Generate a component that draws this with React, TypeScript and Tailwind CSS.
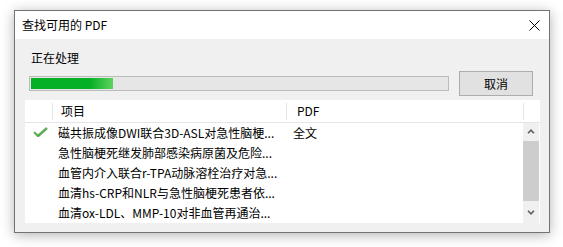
import React from "react";

const rows = [
  { title: "磁共振成像DWI联合3D-ASL对急性脑梗...", pdf: "全文", done: true },
  { title: "急性脑梗死继发肺部感染病原菌及危险...", pdf: "", done: false },
  { title: "血管内介入联合r-TPA动脉溶栓治疗对急...", pdf: "", done: false },
  { title: "血清hs-CRP和NLR与急性脑梗死患者依...", pdf: "", done: false },
  { title: "血清ox-LDL、MMP-10对非血管再通治...", pdf: "", done: false },
];

function CheckMark() {
  return (
    <svg width="15" height="10" viewBox="0 0 15 10" className="mb-[3px]">
      <defs>
        <linearGradient id="chk" x1="0" y1="0" x2="1" y2="1">
          <stop offset="0" stopColor="#7cc576" />
          <stop offset="1" stopColor="#3f9a3a" />
        </linearGradient>
      </defs>
      <path d="M1 5.2 L5 9 L14 1" fill="none" stroke="url(#chk)" strokeWidth="2.4" strokeLinejoin="round" />
    </svg>
  );
}

function Chevron({ up }: { up?: boolean }) {
  return (
    <svg width="8" height="5" viewBox="0 0 8 5">
      <path
        d={up ? "M1 4.2 L4 1.2 L7 4.2" : "M1 0.8 L4 3.8 L7 0.8"}
        fill="none"
        stroke="#606060"
        strokeWidth="1.6"
      />
    </svg>
  );
}

export default function App() {
  return (
    <div className="w-[563px] h-[247px] bg-white pt-[10px] pl-[14px] font-['Noto_Sans_CJK_SC','Noto_Sans',sans-serif] text-[12px] text-black">
      <div className="w-[536px] h-[223px] border border-[#737373] flex flex-col shadow-[0_2px_12px_rgba(0,0,0,0.3)]">
        <div className="h-[30px] bg-white flex items-center justify-between pl-[7px] pr-[9px]">
          <span className="leading-[16px]">查找可用的 PDF</span>
          <svg width="11" height="11" viewBox="0 0 11 11">
            <path d="M0.5 0.5 L10.5 10.5 M10.5 0.5 L0.5 10.5" stroke="#000" strokeWidth="1" />
          </svg>
        </div>

        <div className="flex-1 bg-[#f0f0f0] pl-[10px] pr-[9px] pb-[9px] flex flex-col">
          <div className="pt-[11px] pl-[6px] leading-[16px]">正在处理</div>

          <div className="mt-[5px] h-[25px] flex items-center">
            <div className="ml-[4px] w-[420px] h-[15px] border border-[#bcbcbc] bg-[#e6e6e6] p-[1px]">
              <div className="h-full w-[82px] bg-[linear-gradient(90deg,#06b025_0%,#06b025_72%,#5ed35e_100%)]" />
            </div>
            <div className="ml-[10px] w-[74px] h-[25px] border border-[#adadad] bg-[#e1e1e1] flex items-center justify-center">
              取消
            </div>
          </div>

          <div className="mt-[4px] flex-1 bg-white flex flex-col overflow-hidden">
            <div className="h-[23px] shrink-0 border-b border-[#e5e5e5] flex items-center">
              <div className="w-[27px]" />
              <div className="w-px h-[17px] bg-[#e5e5e5]" />
              <div className="w-[233px] pl-[8px] leading-[16px]">项目</div>
              <div className="w-px h-[17px] bg-[#e5e5e5]" />
              <div className="w-[236px] pl-[10px] leading-[16px]">PDF</div>
              <div className="w-px h-[17px] bg-[#e5e5e5]" />
            </div>

            <div className="flex-1 flex overflow-hidden">
              <div className="w-[498px] flex flex-col overflow-hidden">
                {rows.map((r) => (
                  <div key={r.title} className="h-[20px] shrink-0 flex items-center">
                    <div className="w-[27px] pl-[8px] flex items-center">{r.done && <CheckMark />}</div>
                    <div className="w-[234px] pl-[6px] whitespace-nowrap leading-[16px]">{r.title}</div>
                    <div className="w-[237px] pl-[7px] leading-[16px]">{r.pdf}</div>
                  </div>
                ))}
              </div>
              <div className="w-[16px] bg-[#f0f0f0] flex flex-col">
                <div className="h-[17px] flex items-center justify-center">
                  <Chevron up />
                </div>
                <div className="h-[60px] mt-[1px] bg-[#cdcdcd]" />
                <div className="flex-1 flex items-center justify-center">
                  <Chevron />
                </div>
              </div>
            </div>
          </div>
        </div>
      </div>
    </div>
  );
}
